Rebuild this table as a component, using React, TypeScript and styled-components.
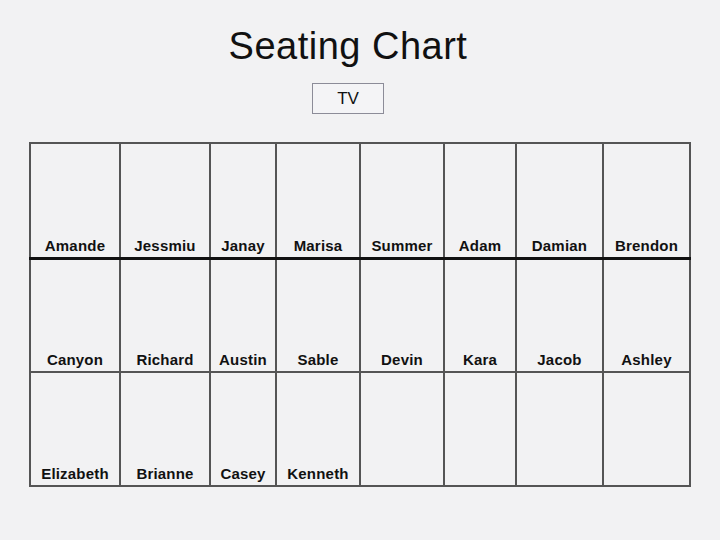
import React from "react";
import styled, { createGlobalStyle } from "styled-components";

const Global = createGlobalStyle`
  html, body { margin: 0; padding: 0; background: #f2f2f3; }
  body { font-family: "Liberation Sans", Arial, sans-serif; }
`;

const Page = styled.div`
  width: 720px;
  height: 540px;
  display: flex;
  flex-direction: column;
  align-items: center;
  background: #f2f2f3;
`;

const Title = styled.h1`
  margin: 24px 0 0 -24px;
  font-size: 38px;
  letter-spacing: 0.5px;
  font-weight: normal;
  line-height: 44px;
  color: #111;
`;

const TVBox = styled.div`
  margin: 15px 0 0 -24px;
  width: 70px;
  height: 29px;
  border: 1.5px solid #8c8c98;
  display: flex;
  align-items: center;
  justify-content: center;
  font-size: 17px;
  color: #111;
  background: #f4f4f6;
`;

const Table = styled.table`
  margin-top: 28px;
  border-collapse: collapse;
  table-layout: fixed;
  width: 660px;
`;

const Row = styled.tr<{ $tall?: boolean }>`
  height: ${(p) => (p.$tall ? 115 : 114)}px;
`;

const Cell = styled.td<{ $head?: boolean }>`
  border: 2px solid #555;
  border-bottom: ${(p) => (p.$head ? "3px solid #111" : "2px solid #555")};
  vertical-align: bottom;
  text-align: center;
  padding: 0 0 3px 0;
  font-size: 15px;
  letter-spacing: 0.2px;
  font-weight: bold;
  color: #111;
  white-space: nowrap;
  overflow: hidden;
`;

const widths = [90, 90, 66, 84, 84, 72, 87, 87];

const rows = [
  ["Amande", "Jessmiu", "Janay", "Marisa", "Summer", "Adam", "Damian", "Brendon"],
  ["Canyon", "Richard", "Austin", "Sable", "Devin", "Kara", "Jacob", "Ashley"],
  ["Elizabeth", "Brianne", "Casey", "Kenneth", "", "", "", ""],
];

export default function App() {
  return (
    <Page>
      <Global />
      <Title>Seating Chart</Title>
      <TVBox>TV</TVBox>
      <Table>
        <colgroup>
          {widths.map((w, i) => (
            <col key={i} style={{ width: w }} />
          ))}
        </colgroup>
        <tbody>
          {rows.map((r, i) => (
            <Row key={i} $tall={i === 0}>
              {r.map((n, j) => (
                <Cell key={j} $head={i === 0}>
                  {n}
                </Cell>
              ))}
            </Row>
          ))}
        </tbody>
      </Table>
    </Page>
  );
}
